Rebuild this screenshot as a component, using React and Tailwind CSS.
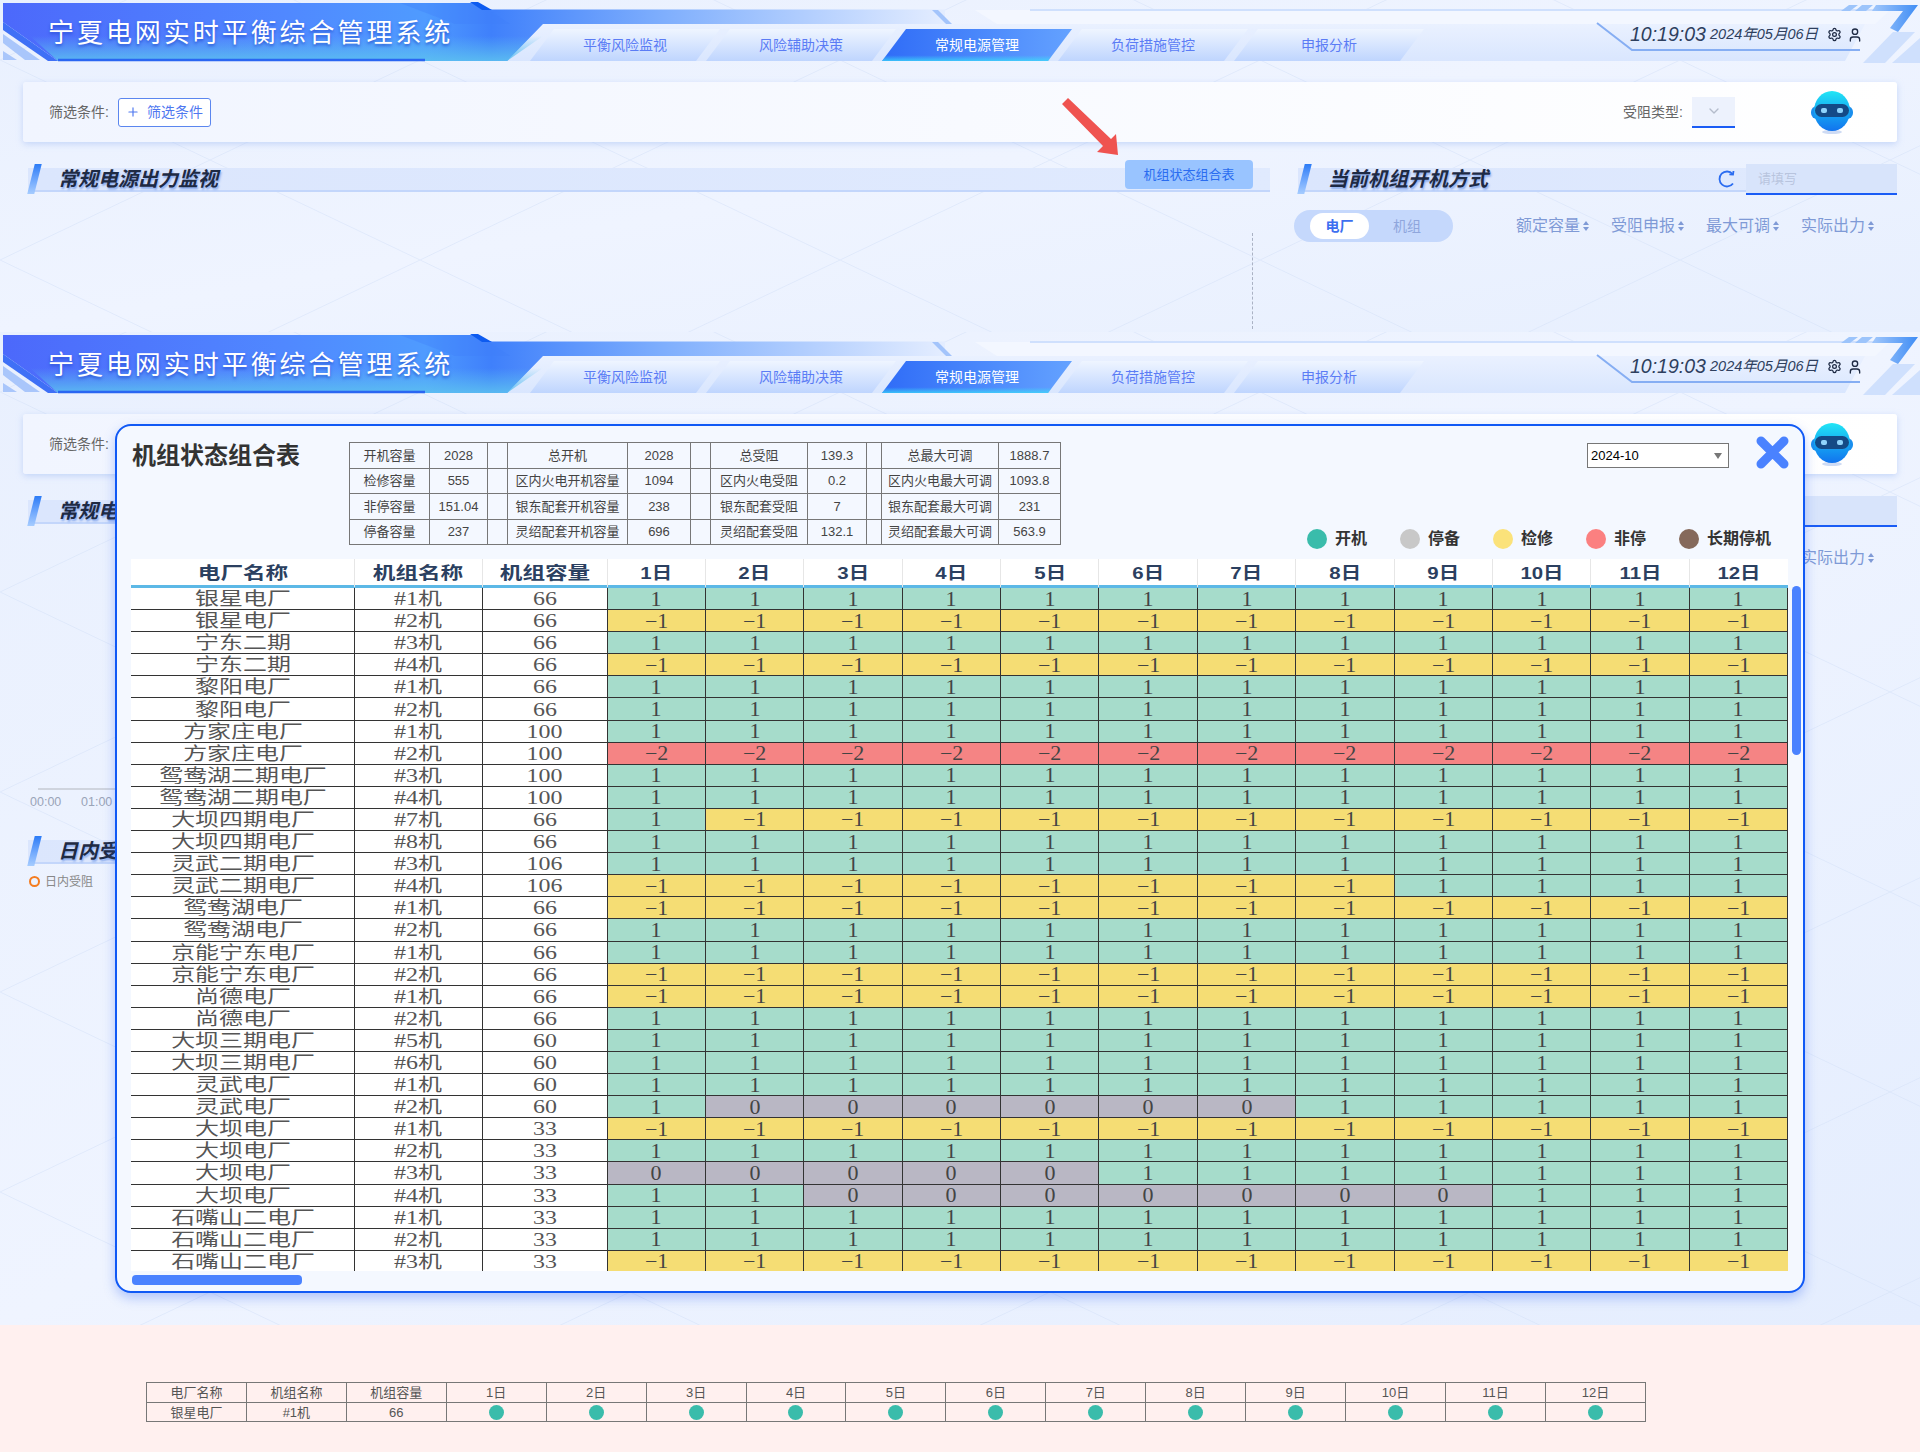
import { ChevronDown, Plus, Settings, User } from 'lucide-react';

const tabs = ['平衡风险监视', '风险辅助决策', '常规电源管理', '负荷措施管控', '申报分析'];
const days = Array.from({ length: 12 }, (_, i) => `${i + 1}日`);

const fill = (...parts) => parts.flatMap(([v, n]) => Array(n).fill(v));

const rows = [
  ['银星电厂', '#1机', 66, fill([1, 12])],
  ['银星电厂', '#2机', 66, fill([-1, 12])],
  ['宁东二期', '#3机', 66, fill([1, 12])],
  ['宁东二期', '#4机', 66, fill([-1, 12])],
  ['黎阳电厂', '#1机', 66, fill([1, 12])],
  ['黎阳电厂', '#2机', 66, fill([1, 12])],
  ['方家庄电厂', '#1机', 100, fill([1, 12])],
  ['方家庄电厂', '#2机', 100, fill([-2, 12])],
  ['鸳鸯湖二期电厂', '#3机', 100, fill([1, 12])],
  ['鸳鸯湖二期电厂', '#4机', 100, fill([1, 12])],
  ['大坝四期电厂', '#7机', 66, fill([1, 1], [-1, 11])],
  ['大坝四期电厂', '#8机', 66, fill([1, 12])],
  ['灵武二期电厂', '#3机', 106, fill([1, 12])],
  ['灵武二期电厂', '#4机', 106, fill([-1, 8], [1, 4])],
  ['鸳鸯湖电厂', '#1机', 66, fill([-1, 12])],
  ['鸳鸯湖电厂', '#2机', 66, fill([1, 12])],
  ['京能宁东电厂', '#1机', 66, fill([1, 12])],
  ['京能宁东电厂', '#2机', 66, fill([-1, 12])],
  ['尚德电厂', '#1机', 66, fill([-1, 12])],
  ['尚德电厂', '#2机', 66, fill([1, 12])],
  ['大坝三期电厂', '#5机', 60, fill([1, 12])],
  ['大坝三期电厂', '#6机', 60, fill([1, 12])],
  ['灵武电厂', '#1机', 60, fill([1, 12])],
  ['灵武电厂', '#2机', 60, fill([1, 1], [0, 6], [1, 5])],
  ['大坝电厂', '#1机', 33, fill([-1, 12])],
  ['大坝电厂', '#2机', 33, fill([1, 12])],
  ['大坝电厂', '#3机', 33, fill([0, 5], [1, 7])],
  ['大坝电厂', '#4机', 33, fill([1, 2], [0, 7], [1, 3])],
  ['石嘴山二电厂', '#1机', 33, fill([1, 12])],
  ['石嘴山二电厂', '#2机', 33, fill([1, 12])],
  ['石嘴山二电厂', '#3机', 33, fill([-1, 12])],
];

const summary = [
  ['开机容量', '2028', '总开机', '2028', '总受阻', '139.3', '总最大可调', '1888.7'],
  ['检修容量', '555', '区内火电开机容量', '1094', '区内火电受阻', '0.2', '区内火电最大可调', '1093.8'],
  ['非停容量', '151.04', '银东配套开机容量', '238', '银东配套受阻', '7', '银东配套最大可调', '231'],
  ['停备容量', '237', '灵绍配套开机容量', '696', '灵绍配套受阻', '132.1', '灵绍配套最大可调', '563.9'],
];

const legend = [
  ['开机', 'bg-[#3abcab]'],
  ['停备', 'bg-[#c8c8c8]'],
  ['检修', 'bg-[#fbe27a]'],
  ['非停', 'bg-[#fb8080]'],
  ['长期停机', 'bg-[#85695b]'],
];

const cellColors = {
  1: 'bg-[#a6dccb]',
  0: 'bg-[#b9b7c4]',
  '-1': 'bg-[#f5dd74]',
  '-2': 'bg-[#f58484]',
};

const Robot = () => (
  <svg width="44" height="46" viewBox="0 0 44 46">
    <defs>
      <linearGradient id="robotHead" x1="0" y1="0" x2="0" y2="1">
        <stop offset="0" stopColor="#22e6f5" />
        <stop offset="0.55" stopColor="#15a5f2" />
        <stop offset="1" stopColor="#1273ee" />
      </linearGradient>
    </defs>
    <ellipse cx="22" cy="43" rx="10" ry="2" fill="#9db8ea" opacity="0.5" />
    <rect x="1" y="17" width="42" height="13" rx="6" fill="#1a8fee" />
    <ellipse cx="22" cy="22" rx="18" ry="20" fill="url(#robotHead)" />
    <rect x="5" y="15" width="34" height="13" rx="6.5" fill="#144a86" />
    <rect x="11" y="19" width="6" height="5" rx="2" fill="#8fd3fb" />
    <rect x="27" y="19" width="6" height="5" rx="2" fill="#8fd3fb" />
  </svg>
);

const SortIcon = () => (
  <svg width="6" height="12" viewBox="0 0 6 12" className="ml-[3px]">
    <path d="M3 1 L6 5 L0 5 Z M3 11 L0 7 L6 7 Z" fill="#7f9ad6" />
  </svg>
);

const RefreshIcon = () => (
  <svg width="18" height="18" viewBox="0 0 18 18" className="ml-auto mr-[10px]" fill="none" stroke="#2a6cf0" strokeWidth="1.8">
    <path d="M15 13.5 A7.5 7.5 0 1 1 14.6 4" />
    <path d="M15.5 1 L15 4.6 L11.4 4.4" />
  </svg>
);

// header artwork, the tabs and clock sit on top of it
const HeaderArt = ({ id }) => (
  <svg className="absolute inset-0" width="1920" height="64" viewBox="0 0 1920 64">
    <defs>
      <linearGradient id={`${id}-main`} x1="0" y1="0" x2="945" y2="0" gradientUnits="userSpaceOnUse">
        <stop offset="0" stopColor="#4c68fb" />
        <stop offset="0.3" stopColor="#5088ff" />
        <stop offset="0.45" stopColor="#4f9bff" />
        <stop offset="0.52" stopColor="#3f80fb" />
        <stop offset="0.7" stopColor="#7eaefd" />
        <stop offset="1" stopColor="#e4edff" />
      </linearGradient>
      <linearGradient id={`${id}-glow`} x1="0" y1="36" x2="0" y2="60" gradientUnits="userSpaceOnUse">
        <stop offset="0" stopColor="#5cc0f0" stopOpacity="0" />
        <stop offset="1" stopColor="#5cc0f0" stopOpacity="0.85" />
      </linearGradient>
      <linearGradient id={`${id}-panel`} x1="0" y1="24" x2="0" y2="61" gradientUnits="userSpaceOnUse">
        <stop offset="0" stopColor="#eaf1ff" />
        <stop offset="1" stopColor="#d9e6fe" />
      </linearGradient>
      <linearGradient id={`${id}-corner`} x1="1875" y1="0" x2="1918" y2="0" gradientUnits="userSpaceOnUse">
        <stop offset="0" stopColor="#9cc4fb" />
        <stop offset="1" stopColor="#3f8df5" />
      </linearGradient>
    </defs>
    <polygon points="520,24 1865,24 1845,61 500,61" fill={`url(#${id}-panel)`} />
    <polygon points="975,10 1890,10 1875,24 997,24" fill="#f3f7ff" />
    <line x1="1030" y1="10" x2="1885" y2="10" stroke="#cfe0fd" strokeWidth="2" />
    <polygon points="3,3 478,3 490,9.5 945,9.5 945,24 543,24 507,61 58,61 3,22" fill={`url(#${id}-main)`} />
    <polygon points="58,61 3,22 3,30 48,61" fill="#3f70f6" />
    <polygon points="30,36 620,36 543,36 507,61 58,61" fill={`url(#${id}-glow)`} />
    <polygon points="400,3 478,3 510,24 455,24" fill="#3f7ffa" opacity="0.35" />
    <polygon points="470,2 478,2 492,10 482,10" fill="#0d5bf0" />
    <polygon points="932,10 938,10 952,24 946,24" fill="#a3c4fb" />
    <line x1="58" y1="60" x2="425" y2="60" stroke="#2a66f2" strokeWidth="2.5" />
    <polygon points="3,34 3,43 25,60 40,60" fill="#a9c6fb" />
    <polygon points="3,51 3,60 17,60" fill="#a9c6fb" />
    <polyline points="1597,23 1632,50 1860,50" fill="none" stroke="#86aef3" strokeWidth="2" />
    <polygon points="1849,5 1858,5 1850,11 1841,11" fill="#9cc4fb" />
    <polygon points="1862,5 1873,5 1866,11 1855,11" fill="#9cc4fb" />
    <polygon points="1876,5 1918,5 1898,32 1890,28 1903,11 1872,11" fill={`url(#${id}-corner)`} />
    <polygon points="1863,63 1893,32 1915,32 1885,63" fill="#cfe0fd" />
    <polygon points="1892,63 1920,38 1920,63" fill="#cfe0fd" />
  </svg>
);

const Header = ({ id }) => (
  <div className="relative flex h-[64px]">
    <HeaderArt id={id} />
    <div className="relative w-[530px] shrink-0 pl-[48px] pt-[15px] text-[26px] leading-[36px] tracking-[2.95px] text-white [text-shadow:0_2px_3px_rgba(30,70,200,0.7)]">
      宁夏电网实时平衡综合管理系统
    </div>
    <nav className="relative mt-[29px] flex h-[32px]">
      {tabs.map((t, i) => (
        <div
          key={t}
          className={
            i === 2
              ? 'flex w-[190px] -ml-[14px] items-center justify-center text-[14px] text-white bg-[linear-gradient(to_top,rgba(60,220,250,0.75),transparent_18%),linear-gradient(to_right,#2f6cf7,#64a2ff)] [clip-path:polygon(24px_0,190px_0,166px_32px,0_32px)]'
              : 'flex w-[190px] first:ml-0 -ml-[14px] items-center justify-center text-[14px] text-[#5b7cf5] bg-gradient-to-b from-[#eff5ff] to-[#bfd5fe] [clip-path:polygon(24px_0,190px_0,166px_32px,0_32px)]'
          }
        >
          {t}
        </div>
      ))}
    </nav>
    <div className="relative ml-[206px] flex h-[50px] items-center pt-[19px] italic text-[#2e3f5e]">
      <span className="w-[80px] text-[19.5px]">10:19:03</span>
      <span className="w-[117px] text-[14.5px]">2024年05月06日</span>
      <Settings size={15} className="text-[#1e2a44]" />
      <User size={16} className="ml-[5px] text-[#1e2a44]" />
    </div>
  </div>
);

const FilterBar = () => (
  <div className="mx-[23px] mt-[18px] flex h-[60px] items-center rounded-[3px] bg-gradient-to-r from-[#f1f5ff] to-white pl-[26px] shadow-[0_2px_6px_rgba(170,195,245,0.6)]">
    <span className="text-[14px] text-[#666]">筛选条件:</span>
    <button className="ml-[9px] flex h-[29px] w-[93px] items-center rounded-[3px] border border-[#5b86ef] bg-white pl-[7px] text-[14px] text-[#4f78f0]">
      <Plus size={14} />
      <span className="ml-[7px]">筛选条件</span>
    </button>
    <span className="ml-auto mr-[9px] text-[14px] text-[#666]">受阻类型:</span>
    <div className="flex h-[31px] w-[43px] items-center justify-center border-b-2 border-[#1a5cf5] bg-[#edf2fd] text-[#b4bccb]">
      <ChevronDown size={16} />
    </div>
    <div className="ml-[75px] mr-[43px] flex">
      <Robot />
    </div>
  </div>
);

const SectionTitle = ({ text, className = '', children }) => (
  <div className={`relative flex h-[28px] items-end ${className}`}>
    <div className="flex h-[24px] flex-1 items-center border-b-2 border-[#c3d6fb] bg-gradient-to-r from-[#dbe6fd] to-[#e0eafe] pl-[30px]">
      <span className="text-[20px] font-bold italic text-[#1e2a44] [text-shadow:1px_2px_2px_rgba(40,100,220,0.45)]">{text}</span>
      {children}
    </div>
    <div className="absolute left-[3px] top-0 h-[30px] w-[7px] -skew-x-[14deg] bg-gradient-to-b from-[#2b7bf6] to-[#a6ccff]" />
  </div>
);

const Screen = ({ id, children }) => (
  <>
    <Header id={id} />
    <FilterBar />
    <div className="mt-[22px] flex pl-[28px]">
      <div className="w-[1242px] shrink-0">
        <SectionTitle text="常规电源出力监视">
          <button className="ml-auto mr-[17px] -mt-[8px] flex h-[29px] w-[128px] shrink-0 self-start items-center justify-center rounded-[4px] bg-[#99c4ff] text-[13px] text-[#2a6cf0]">
            机组状态组合表
          </button>
        </SectionTitle>
        <div className="mt-[41px] h-[96px] w-[1225px] border-r border-dashed border-[#aab2c4]">{children}</div>
      </div>
      <div className="ml-[28px] flex-1 pr-[23px]">
        <SectionTitle text="当前机组开机方式">
          <RefreshIcon />
          <div className="-mt-[4px] flex h-[31px] w-[151px] shrink-0 self-start items-center border-b-2 border-[#1a5cf5] bg-[#d8e4fb] pl-[12px] text-[13px] text-[#b8c4de]">
            请填写
          </div>
        </SectionTitle>
        <div className="mt-[18px] flex items-center">
          <div className="-ml-[4px] flex h-[32px] w-[159px] items-center rounded-full bg-[#c5d8fc] pl-[16px] text-[14px]">
            <span className="flex h-[26px] w-[59px] items-center justify-center rounded-full bg-white font-bold text-[#3d6ff0]">电厂</span>
            <span className="ml-[24px] text-[#8fa6dc]">机组</span>
          </div>
          <div className="ml-[63px] flex text-[16px] text-[#7f9ad6]">
            {['额定容量', '受阻申报', '最大可调', '实际出力'].map((s) => (
              <span key={s} className="flex w-[95px] items-center">
                {s}
                <SortIcon />
              </span>
            ))}
          </div>
        </div>
      </div>
    </div>
  </>
);

const StatusModal = () => (
  <div className="absolute left-[115px] top-[92px] h-[869px] w-[1690px] rounded-[16px] border-2 border-[#1059f5] bg-[#f4f8ff] pl-[14px] shadow-[0_5px_12px_rgba(60,110,240,0.35)]">
    <div className="flex h-[133px]">
      <h2 className="w-[218px] shrink-0 pl-[1px] pt-[14px] text-[24px] font-bold leading-[32px] text-[#333]">机组状态组合表</h2>
      <div className="pt-[16px]">
        <table className="w-[711px] table-fixed border-collapse text-center text-[13px] leading-none text-[#444]">
          <colgroup>
            <col className="w-[80px]" />
            <col className="w-[58px]" />
            <col className="w-[20px]" />
            <col className="w-[120px]" />
            <col className="w-[63px]" />
            <col className="w-[20px]" />
            <col className="w-[97px]" />
            <col className="w-[59px]" />
            <col className="w-[15px]" />
            <col className="w-[117px]" />
            <col className="w-[62px]" />
          </colgroup>
          <tbody>
            {summary.map((r) => (
              <tr key={r[0]} className="h-[25.5px]">
                <td className="border border-[#777]">{r[0]}</td>
                <td className="border border-[#777]">{r[1]}</td>
                <td className="border border-[#777]" />
                <td className="border border-[#777]">{r[2]}</td>
                <td className="border border-[#777]">{r[3]}</td>
                <td className="border border-[#777]" />
                <td className="border border-[#777]">{r[4]}</td>
                <td className="border border-[#777]">{r[5]}</td>
                <td className="border border-[#777]" />
                <td className="border border-[#777]">{r[6]}</td>
                <td className="border border-[#777]">{r[7]}</td>
              </tr>
            ))}
          </tbody>
        </table>
      </div>
      <div className="flex-1">
        <div className="flex pl-[526px] pt-[10px]">
          <div className="mt-[7px] flex h-[25px] w-[142px] items-center border border-[#767676] bg-white pl-[3px] text-[13px] text-black">
            2024-10
            <svg width="8" height="6" viewBox="0 0 8 6" className="ml-auto mr-[6px]">
              <path d="M0 0 L8 0 L4 6 Z" fill="#777" />
            </svg>
          </div>
          <svg width="33" height="33" viewBox="0 0 33 33" className="ml-[27px]">
            <path d="M5 5 L28 28 M28 5 L5 28" stroke="#4a82ff" strokeWidth="9" strokeLinecap="round" />
          </svg>
        </div>
        <div className="mt-[58px] flex pl-[246px]">
          {legend.map(([label, dot]) => (
            <div key={label} className="flex w-[93px] shrink-0 items-center text-[16px] font-bold text-[#333]">
              <span className={`mr-[8px] h-[20px] w-[20px] shrink-0 rounded-full ${dot}`} />
              <span className="whitespace-nowrap">{label}</span>
            </div>
          ))}
        </div>
      </div>
    </div>

    <div className="h-[712px] w-[1657px] overflow-hidden">
      <div className="grid h-[29px] grid-cols-[224px_127.5px_125px_repeat(12,98.4px)] border-b-[3px] border-[#5cb8e6] bg-white text-[17px] font-bold text-[#2b4060]">
        {['电厂名称', '机组名称', '机组容量'].map((h) => (
          <div key={h} className="flex items-center justify-center border-r border-[#e6e6e6] pt-[2px]">
            <span className="inline-block scale-x-[1.33] whitespace-nowrap">{h}</span>
          </div>
        ))}
        {days.map((d) => (
          <div key={d} className="flex items-center justify-center border-r border-[#e6e6e6] pt-[2px] last:border-r-0">
            <span className="inline-block scale-x-[1.2] whitespace-nowrap">{d}</span>
          </div>
        ))}
      </div>
      <div className="grid auto-rows-[22.1px] grid-cols-[224px_127.5px_125px_repeat(12,98.4px)] bg-white font-['Liberation_Serif','Noto_Sans_CJK_SC',serif] text-[18px] leading-none text-[#555]">
        {rows.map(([plant, unit, cap, vals], r) => [
          ...[plant, unit, cap].map((t, i) => (
            <div key={`n${r}-${i}`} className="flex items-center justify-center overflow-hidden border-b border-r border-[#333] pt-[1px]">
              <span className="inline-block scale-x-[1.33] whitespace-nowrap">{t}</span>
            </div>
          )),
          ...vals.map((v, i) => (
            <div key={`v${r}-${i}`} className={`flex items-center justify-center overflow-hidden border-b border-r border-[#333] text-[20px] text-[#444] last:border-r-0 ${cellColors[v]}`}>
              <span className="inline-block scale-x-110">{v < 0 ? `−${-v}` : v}</span>
            </div>
          )),
        ])}
      </div>
    </div>

    <div className="ml-[1px] mt-[4px] h-[10px] w-[170px] rounded-[4px] bg-[#4a82ff]" />
    <div className="absolute right-[2px] top-[160px] h-[169px] w-[9px] rounded-full bg-[#4a82ff]" />
  </div>
);

const Backdrop = ({ id }) => (
  <svg className="absolute inset-0 h-full w-full">
    <defs>
      <pattern id={id} width="420" height="200" patternUnits="userSpaceOnUse" y="60">
        <path d="M0 0 L420 200 M420 0 L0 200" stroke="#d3e0f8" strokeWidth="1" opacity="0.5" />
      </pattern>
    </defs>
    <rect width="100%" height="100%" fill={`url(#${id})`} />
  </svg>
);

const App = () => {
  return (
    <div className="h-[1452px] w-[1920px] overflow-hidden font-['Liberation_Sans','Noto_Sans_CJK_SC',sans-serif]">
      <section className="relative h-[332px] overflow-hidden bg-gradient-to-br from-[#e9f0fe] via-[#eff4ff] to-[#e7effe]">
        <Backdrop id="grid-a" />
        <div className="relative">
          <Screen id="a" />
        </div>
        <svg className="absolute left-[1060px] top-[96px]" width="64" height="64" viewBox="0 0 64 64">
          <path d="M8 2 L51 43 L56 38 L58 59 L37 56 L43 50 L2 8 Z" fill="#ef5350" />
        </svg>
      </section>

      <section className="relative h-[993px] overflow-hidden bg-gradient-to-br from-[#e9f0fe] via-[#eff4ff] to-[#e4edfe]">
        <Backdrop id="grid-b" />
        <div className="relative">
          <Screen id="b">
            <div className="pt-[223px]">
              <div className="ml-[10px] h-[2px] w-[200px] bg-[#cfd4de]" />
              <div className="ml-[2px] mt-[3px] flex text-[12.5px] text-[#9aa4b8]">
                <span className="w-[51px]">00:00</span>
                <span>01:00</span>
              </div>
              <div className="mt-[24px] w-[300px]">
                <SectionTitle text="日内受阻" />
              </div>
              <div className="mt-[9px] flex items-center pl-[1px] text-[12px] text-[#888]">
                <span className="mr-[5px] h-[11px] w-[11px] rounded-full border-2 border-[#f47c20]" />
                日内受阻
              </div>
            </div>
          </Screen>
        </div>
        <StatusModal />
      </section>

      <section className="h-[127px] bg-[#fff0ef] pl-[146px] pt-[57px]">
        <table className="w-[1500px] table-fixed border-collapse text-center text-[13px] leading-none text-[#555]">
          <tbody>
            <tr className="h-[20px]">
              {['电厂名称', '机组名称', '机组容量', ...days].map((h) => (
                <td key={h} className="border border-[#777]">{h}</td>
              ))}
            </tr>
            <tr className="h-[19px]">
              <td className="border border-[#777]">银星电厂</td>
              <td className="border border-[#777]">#1机</td>
              <td className="border border-[#777]">66</td>
              {days.map((d) => (
                <td key={d} className="border border-[#777]">
                  <span className="mx-auto block h-[15px] w-[15px] rounded-full bg-[#3abcab]" />
                </td>
              ))}
            </tr>
          </tbody>
        </table>
      </section>
    </div>
  );
};

export default App;
